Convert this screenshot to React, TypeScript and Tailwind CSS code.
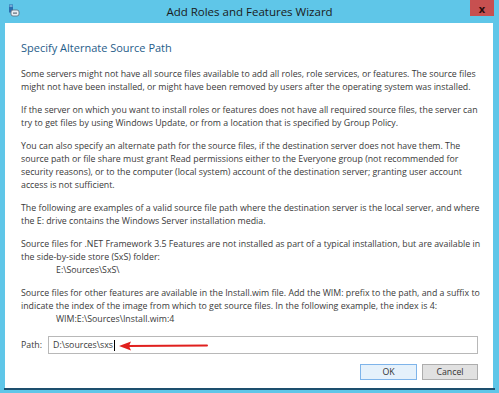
import React from "react";

const font = { fontFamily: '"Open Sans", "Noto Sans", sans-serif' };

function Para({ lines, className = "" }: { lines: React.ReactNode[]; className?: string }) {
  return (
    <div className={`mb-[10px] ${className}`}>
      {lines.map((l, i) => (
        <div key={i} className="whitespace-nowrap">
          {l}
        </div>
      ))}
    </div>
  );
}

function ServerIcon() {
  return (
    <svg width="12" height="13" viewBox="0 0 12 13">
      <rect x="1" y="0.5" width="4" height="8" fill="#2a6fb0" />
      <rect x="1.5" y="1.5" width="3" height="1" fill="#bfe3f5" />
      <rect x="3" y="6" width="8" height="6" rx="2" fill="#e8eef3" stroke="#5a6b78" strokeWidth="0.8" />
      <rect x="5" y="8.5" width="4" height="1.2" fill="#5a6b78" />
    </svg>
  );
}

export default function App() {
  return (
    <div className="w-[499px] h-[393px] bg-[#5fc6e8] relative overflow-hidden" style={font}>
      {/* title bar */}
      <div className="h-[23px] flex items-center relative">
        <div className="absolute left-[8px] top-[4px]">
          <ServerIcon />
        </div>
        <div className="flex-1 text-center text-[11.5px] text-[#1a1a1a] pt-[1px]">Add Roles and Features Wizard</div>
        <div className="absolute left-[470px] top-0 w-[24px] h-[16px] bg-[#c75050] flex items-center justify-center text-[11px] font-bold text-[#2b0c0c] leading-none">
          x
        </div>
      </div>

      <div className="mx-[5px] w-[488px] h-[365px] bg-white pl-[16px] pt-[17px] text-[8.8px] leading-[13px] text-[#3a3a3a] relative">
        <div className="text-[11px] leading-[16px] text-[#1f5d8a] mb-[12px]">Specify Alternate Source Path</div>

        <Para
          lines={[
            "Some servers might not have all source files available to add all roles, role services, or features. The source files",
            "might not have been installed, or might have been removed by users after the operating system was installed.",
          ]}
        />
        <Para
          lines={[
            "If the server on which you want to install roles or features does not have all required source files, the server can",
            "try to get files by using Windows Update, or from a location that is specified by Group Policy.",
          ]}
        />
        <Para
          lines={[
            "You can also specify an alternate path for the source files, if the destination server does not have them. The",
            "source path or file share must grant Read permissions either to the Everyone group (not recommended for",
            "security reasons), or to the computer (local system) account of the destination server; granting user account",
            "access is not sufficient.",
          ]}
        />
        <Para
          lines={[
            "The following are examples of a valid source file path where the destination server is the local server, and where",
            "the E: drive contains the Windows Server installation media.",
          ]}
        />
        <Para
          lines={[
            "Source files for .NET Framework 3.5 Features are not installed as part of a typical installation, but are available in",
            "the side-by-side store (SxS) folder:",
            <span className="pl-[35px]">E:\Sources\SxS\</span>,
          ]}
        />
        <Para
          lines={[
            "Source files for other features are available in the Install.wim file. Add the WIM: prefix to the path, and a suffix to",
            "indicate the index of the image from which to get source files. In the following example, the index is 4:",
            <span className="pl-[35px]">WIM:E:\Sources\Install.wim:4</span>,
          ]}
        />

        <div className="flex items-center mt-[5px]">
          <span className="w-[27px]">Path:</span>
          <div className="w-[430px] h-[18px] border border-[#b8b8b8] flex items-center pl-[4px] relative">
            <span>D:\sources\sxs</span>
            <span className="w-px h-[11px] bg-black ml-px" />
            <svg className="absolute left-[70px] top-[3px]" width="90" height="12" viewBox="0 0 90 12">
              <path d="M8 6 L88 5.5" stroke="#e0201e" strokeWidth="2" strokeLinecap="round" />
              <path d="M0 6 L12 1.5 L10 6 L12 10.5 Z" fill="#e0201e" />
            </svg>
          </div>
        </div>

        <div className="flex justify-end gap-[5px] mt-[10px] pr-[15px]">
          <div className="w-[57px] h-[16px] border border-[#7eb4ea] bg-[#e5f1fb] flex items-center justify-center text-[#333]">OK</div>
          <div className="w-[56px] h-[16px] border border-[#adadad] bg-[#e1e1e1] flex items-center justify-center text-[#333]">Cancel</div>
        </div>
      </div>
      <div className="mx-[4px] h-[2px] bg-[#1d4f6e]" />
    </div>
  );
}
